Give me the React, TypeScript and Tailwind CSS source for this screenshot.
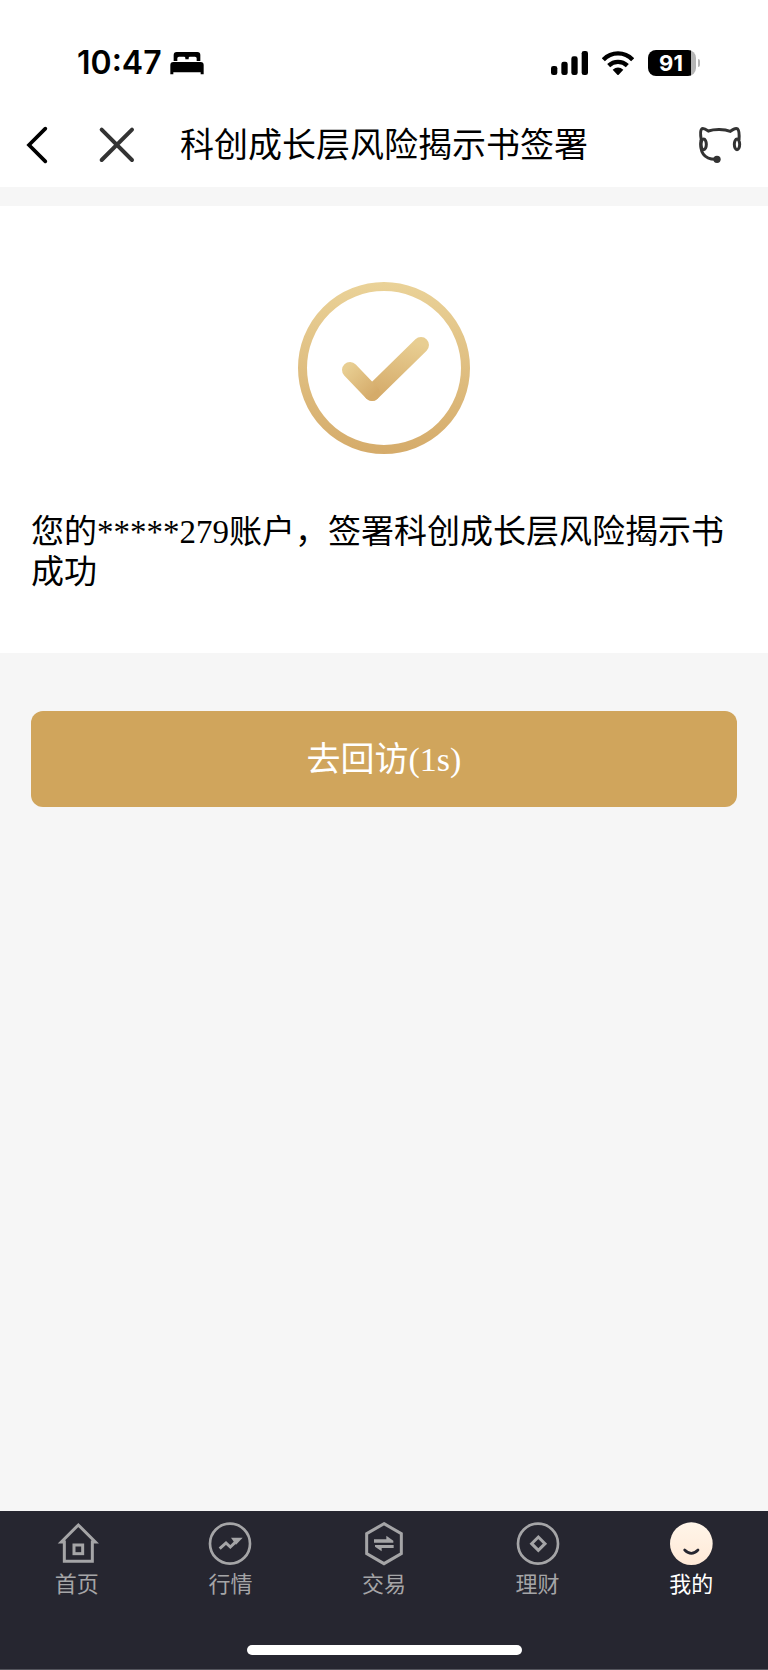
import { useState } from 'react';
import type { ReactNode } from 'react';

interface Tab {
  id: string;
  label: string;
  icon: ReactNode;
}

const tabs: Tab[] = [
  {
    id: 'home',
    label: '首页',
    icon: (
      <g fill="none" stroke="currentColor" strokeWidth="9">
        <path d="M31 66 H22 L73 15 L124 66 H115 V124 H31 Z" />
        <rect x="60" y="75" width="26" height="26" />
      </g>
    ),
  },
  {
    id: 'market',
    label: '行情',
    icon: (
      <>
        <g fill="none" stroke="currentColor">
          <circle cx="69" cy="71" r="60" strokeWidth="8" />
          <path d="M38 86 L57 69 L70 81 L90 62" strokeWidth="9" />
        </g>
        <path d="M72 53 H107 L87 74 Z" fill="currentColor" />
      </>
    ),
  },
  {
    id: 'trade',
    label: '交易',
    icon: (
      <>
        <path d="M69 11 L121 41 V101 L69 131 L17 101 V41 Z" fill="none" stroke="currentColor" strokeWidth="9" />
        <path d="M39 58 H76 V47 L97 62 V68 H39 Z M98 75 V84 H62 V94 L42 80 V75 Z" fill="currentColor" />
      </>
    ),
  },
  {
    id: 'wealth',
    label: '理财',
    icon: (
      <g fill="none" stroke="currentColor">
        <circle cx="69" cy="71" r="60" strokeWidth="8" />
        <path d="M70 51 L90 71 L70 91 L50 71 Z" strokeWidth="9" />
      </g>
    ),
  },
  {
    id: 'mine',
    label: '我的',
    icon: (
      <>
        <defs>
          <linearGradient id="face" x1="0" y1="0" x2="0" y2="1">
            <stop offset="0" stopColor="#fff5e9" />
            <stop offset="1" stopColor="#ffe9d7" />
          </linearGradient>
        </defs>
        <circle cx="70" cy="71" r="64" fill="url(#face)" />
        <path d="M50 90 Q70 110 90 90" fill="none" stroke="#262630" strokeWidth="8" strokeLinecap="round" />
      </>
    ),
  },
];

function StatusBar() {
  return (
    <div className="flex h-[103px] items-center justify-between pt-[22px] pr-[68px] pl-[77px]">
      <div className="flex items-center gap-2">
        <span className="font-[Inter,sans-serif] text-[32px] leading-10 font-semibold">10:47</span>
        <svg width="34" height="24" viewBox="0 0 102 72" aria-label="睡眠模式">
          <path
            d="M11 30 V12 Q11 3 20 3 H82 Q91 3 91 12 V30 H80 V22 Q80 17 75 17 H60 Q56 17 56 21 V25 H46 V21 Q46 17 42 17 H27 Q22 17 22 22 V30 Z"
            fill="#000"
          />
          <path d="M1 70 V42 Q1 33 10 33 H92 Q101 33 101 42 V70 H92 V64 H10 V70 Z" fill="#000" />
        </svg>
      </div>
      <div className="flex items-center gap-[14px]">
        <svg width="37" height="24" viewBox="0 0 111 72" aria-label="信号">
          <rect x="0" y="45" width="19" height="27" rx="7" />
          <rect x="31" y="32" width="19" height="40" rx="7" />
          <rect x="61" y="16" width="19" height="56" rx="7" />
          <rect x="92" y="0" width="19" height="72" rx="7" />
        </svg>
        <svg width="32" height="24" viewBox="0 0 96 72" aria-label="无线网络">
          <g fill="none" stroke="#000" strokeWidth="13">
            <path d="M4 26 C28 1 68 1 92 26" />
            <path d="M20 44 C36 29 60 29 76 44" />
          </g>
          <path d="M32 56 Q48 43 64 56 L50 71 Q48 73 46 71 Z" />
        </svg>
        <div className="flex items-center gap-[2px]">
          <div className="flex h-[26px] w-12 items-center overflow-hidden rounded-[8px] bg-linear-to-r from-black from-90% to-[#b5b5b5] to-90%">
            <span className="w-[46px] text-center font-[Inter,sans-serif] text-[22px] leading-6 font-bold text-white">91</span>
          </div>
          <div className="h-2 w-[2px] rounded-r-full bg-[#b5b5b5]" />
        </div>
      </div>
    </div>
  );
}

function NavHeader() {
  return (
    <header className="flex h-[84px] items-center pr-6 pl-6">
      <button type="button" aria-label="返回">
        <svg width="26" height="42" viewBox="0 0 78 126" fill="none" stroke="#000" strokeWidth="11">
          <path d="M64 14 L15 63 L64 112" strokeLinecap="round" />
        </svg>
      </button>
      <button type="button" aria-label="关闭" className="ml-12">
        <svg width="38" height="38" viewBox="0 0 114 114" fill="none" stroke="#333" strokeWidth="12">
          <path d="M11 11 L102 102 M102 11 L11 102" strokeLinecap="round" />
        </svg>
      </button>
      <h1 className="ml-11 flex-1 text-[34px] leading-10">科创成长层风险揭示书签署</h1>
      <button type="button" aria-label="客服">
        <svg width="48" height="42" viewBox="0 0 144 126" fill="none" stroke="#333" strokeWidth="9">
          <path d="M16 48 C13 32 14 18 17 15 C20 12 28 15 37 21 C55 15 85 15 103 22 C112 15 121 12 125 15 C130 20 130 34 129 48" />
          <ellipse cx="23" cy="61" rx="8" ry="16" />
          <ellipse cx="123" cy="61" rx="8" ry="16" />
          <path d="M15 48 C10 84 24 105 58 106" />
          <circle cx="63" cy="106" r="11" fill="#333" stroke="none" />
        </svg>
      </button>
    </header>
  );
}

function SuccessMark() {
  return (
    <svg width="172" height="172" viewBox="0 0 172 172" fill="none" className="mx-auto">
      <defs>
        <linearGradient id="gold" gradientUnits="userSpaceOnUse" x1="86" y1="0" x2="86" y2="172">
          <stop offset="0" stopColor="#ead298" />
          <stop offset="1" stopColor="#d5ab6a" />
        </linearGradient>
        <linearGradient id="tickLong" gradientUnits="userSpaceOnUse" x1="106" y1="58" x2="92" y2="116">
          <stop offset="0" stopColor="#e8ce92" />
          <stop offset="1" stopColor="#d5ab6a" />
        </linearGradient>
        <linearGradient id="tickShort" gradientUnits="userSpaceOnUse" x1="50" y1="84" x2="76" y2="112">
          <stop offset="0" stopColor="#e8ce92" />
          <stop offset="1" stopColor="#d5ab6a" />
        </linearGradient>
      </defs>
      <circle cx="86" cy="86" r="81.5" stroke="url(#gold)" strokeWidth="9" />
      <g strokeWidth="16" strokeLinecap="round">
        <path d="M123 63 L74 111" stroke="url(#tickLong)" />
        <path d="M52 88 L74 111" stroke="url(#tickShort)" />
      </g>
    </svg>
  );
}

export default function App() {
  const [activeTab, setActiveTab] = useState('mine');

  return (
    <div className="flex min-h-screen flex-col bg-[#f6f6f6] font-['Liberation_Sans','Noto_Sans_CJK_SC',sans-serif] text-black">
      <div className="bg-white">
        <StatusBar />
        <NavHeader />
      </div>

      <main className="mt-[19px] flex-1 font-['Liberation_Serif','Noto_Sans_CJK_SC',serif]">
        <section className="bg-white px-[31px] pt-[76px] pb-[61px]">
          <SuccessMark />
          <p className="mt-[58px] text-[33px] leading-10">您的*****279账户，签署科创成长层风险揭示书成功</p>
        </section>
        <div className="px-[31px] pt-[58px]">
          <button type="button" className="h-24 w-full rounded-xl bg-[#d0a55c] text-[34px] text-white">
            去回访(1s)
          </button>
        </div>
      </main>

      {/* Bottom tab bar */}
      <nav className="border-b border-[#55555d] bg-[#262630] pt-[9px]">
        <div className="grid grid-cols-5">
          {tabs.map((tab) => (
            <button
              key={tab.id}
              type="button"
              onClick={() => setActiveTab(tab.id)}
              className={`flex flex-col items-center ${activeTab === tab.id ? 'text-white' : 'text-[#a5a5a7]'}`}
            >
              <svg width="46" height="46" viewBox="0 0 138 138">
                {tab.icon}
              </svg>
              <span className="mt-[5px] text-[22px] leading-7">{tab.label}</span>
            </button>
          ))}
        </div>
        <div className="mx-auto mt-[46px] mb-[14px] h-[10px] w-[275px] rounded-full bg-white" />
      </nav>
    </div>
  );
}
